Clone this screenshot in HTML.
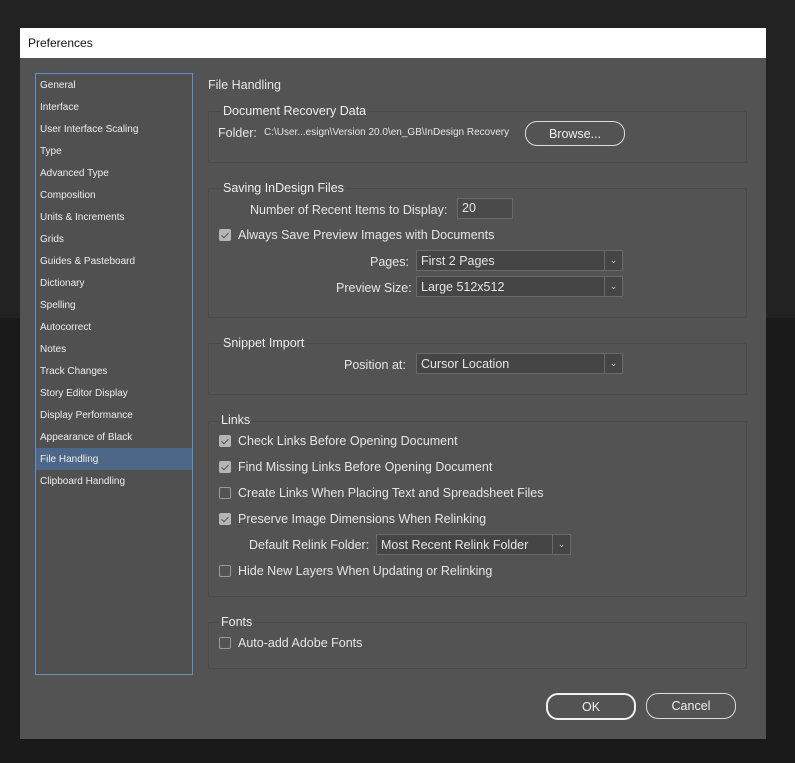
<!DOCTYPE html>
<html><head><meta charset="utf-8"><style>
body{margin:0;width:795px;height:763px;background:#222;position:relative;overflow:hidden;font-family:"Liberation Sans",sans-serif;color:#e6e6e6}
.bot{position:absolute;left:0;top:318px;width:795px;height:445px;background:#1a1a1a}
.dlg{position:absolute;left:20px;top:28px;width:746px;height:711px;background:#535353}
.title{position:absolute;left:0;top:0;width:746px;height:30px;background:#fff;color:#111;font-size:12px;line-height:30px;padding-left:8px;box-sizing:border-box}
.a{position:absolute;white-space:nowrap}
.side{position:absolute;left:15px;top:45px;width:156px;height:600px;border:1px solid #5b93c7;background:#505050}
.side div{height:22px;line-height:23px;font-size:10px;padding-left:4px;color:#eee}
.side .sel{background:#4c6787}
.grp{position:absolute;left:188px;width:537px;border:1px solid #4a4a4a;border-radius:2px}
.gt{position:absolute;font-size:12.5px;background:#535353;padding:0 2px;color:#eee}
.t{font-size:12.5px;margin-top:1px}
.cb{position:absolute;width:10px;height:10px;border:1px solid #9a9a9a;border-radius:2px}
.cb.on{background:#b5b5b5;border-color:#b5b5b5}
.cb.on::after{content:"";position:absolute;left:3px;top:1px;width:3px;height:6px;border:solid #535353;border-width:0 1.5px 1.5px 0;transform:rotate(45deg)}
.dd{position:absolute;height:19px;border:1px solid #6a6a6a;background:#454545;font-size:12.5px;line-height:20px;padding-left:4px;box-sizing:content-box}
.dd .ar{position:absolute;right:0;top:0;width:17px;height:19px;border-left:1px solid #6a6a6a;font-size:9px;text-align:center;line-height:19px;color:#ccc}
.btn{position:absolute;border:1.5px solid #ddd;border-radius:12px;text-align:center;font-size:12.5px;color:#eee}
</style></head><body>
<div class="bot"></div>
<div class="dlg">
<div class="title">Preferences</div>
<div class="side">
<div>General</div><div>Interface</div><div>User Interface Scaling</div><div>Type</div><div>Advanced Type</div><div>Composition</div><div>Units &amp; Increments</div><div>Grids</div><div>Guides &amp; Pasteboard</div><div>Dictionary</div><div>Spelling</div><div>Autocorrect</div><div>Notes</div><div>Track Changes</div><div>Story Editor Display</div><div>Display Performance</div><div>Appearance of Black</div><div class="sel">File Handling</div><div>Clipboard Handling</div>
</div>
<div class="a t" style="left:188px;top:49px">File Handling</div>

<div class="grp" style="top:83px;height:50px"></div>
<div class="gt" style="left:201px;top:76px">Document Recovery Data</div>
<div class="a t" style="left:198px;top:97px">Folder:</div>
<div class="a" style="left:244px;top:99px;font-size:10px">C:\User...esign\Version 20.0\en_GB\InDesign Recovery</div>
<div class="btn" style="left:505px;top:93px;width:98px;height:23px;line-height:24px">Browse...</div>

<div class="grp" style="top:160px;height:128px"></div>
<div class="gt" style="left:201px;top:153px">Saving InDesign Files</div>
<div class="a t" style="left:230px;top:174px">Number of Recent Items to Display:</div>
<div class="a t" style="left:437px;top:169px;width:50px;height:19px;border:1px solid #6a6a6a;background:#4a4a4a;line-height:19px;padding-left:4px">20</div>
<div class="cb on" style="left:199px;top:201px"></div>
<div class="a t" style="left:218px;top:199px">Always Save Preview Images with Documents</div>
<div class="a t" style="left:350px;top:226px">Pages:</div>
<div class="dd" style="left:396px;top:222px;width:201px">First 2 Pages<div class="ar">&#8964;</div></div>
<div class="a t" style="left:316px;top:252px">Preview Size:</div>
<div class="dd" style="left:396px;top:248px;width:201px">Large 512x512<div class="ar">&#8964;</div></div>

<div class="grp" style="top:315px;height:50px"></div>
<div class="gt" style="left:201px;top:308px">Snippet Import</div>
<div class="a t" style="left:324px;top:329px">Position at:</div>
<div class="dd" style="left:396px;top:325px;width:201px">Cursor Location<div class="ar">&#8964;</div></div>

<div class="grp" style="top:393px;height:174px"></div>
<div class="gt" style="left:199px;top:385px">Links</div>
<div class="cb on" style="left:199px;top:407px"></div><div class="a t" style="left:218px;top:405px">Check Links Before Opening Document</div>
<div class="cb on" style="left:199px;top:433px"></div><div class="a t" style="left:218px;top:431px">Find Missing Links Before Opening Document</div>
<div class="cb" style="left:199px;top:459px"></div><div class="a t" style="left:218px;top:457px">Create Links When Placing Text and Spreadsheet Files</div>
<div class="cb on" style="left:199px;top:485px"></div><div class="a t" style="left:218px;top:483px">Preserve Image Dimensions When Relinking</div>
<div class="a t" style="left:229px;top:509px">Default Relink Folder:</div>
<div class="dd" style="left:356px;top:506px;width:189px">Most Recent Relink Folder<div class="ar">&#8964;</div></div>
<div class="cb" style="left:199px;top:537px"></div><div class="a t" style="left:218px;top:535px">Hide New Layers When Updating or Relinking</div>

<div class="grp" style="top:594px;height:45px"></div>
<div class="gt" style="left:199px;top:587px">Fonts</div>
<div class="cb" style="left:199px;top:609px"></div><div class="a t" style="left:218px;top:607px">Auto-add Adobe Fonts</div>

<div class="btn" style="left:526px;top:665px;width:86px;height:23px;line-height:24px;border-width:2px;border-color:#f0f0f0">OK</div>
<div class="btn" style="left:626px;top:665px;width:88px;height:24px;line-height:25px">Cancel</div>
</div>
</body></html>
